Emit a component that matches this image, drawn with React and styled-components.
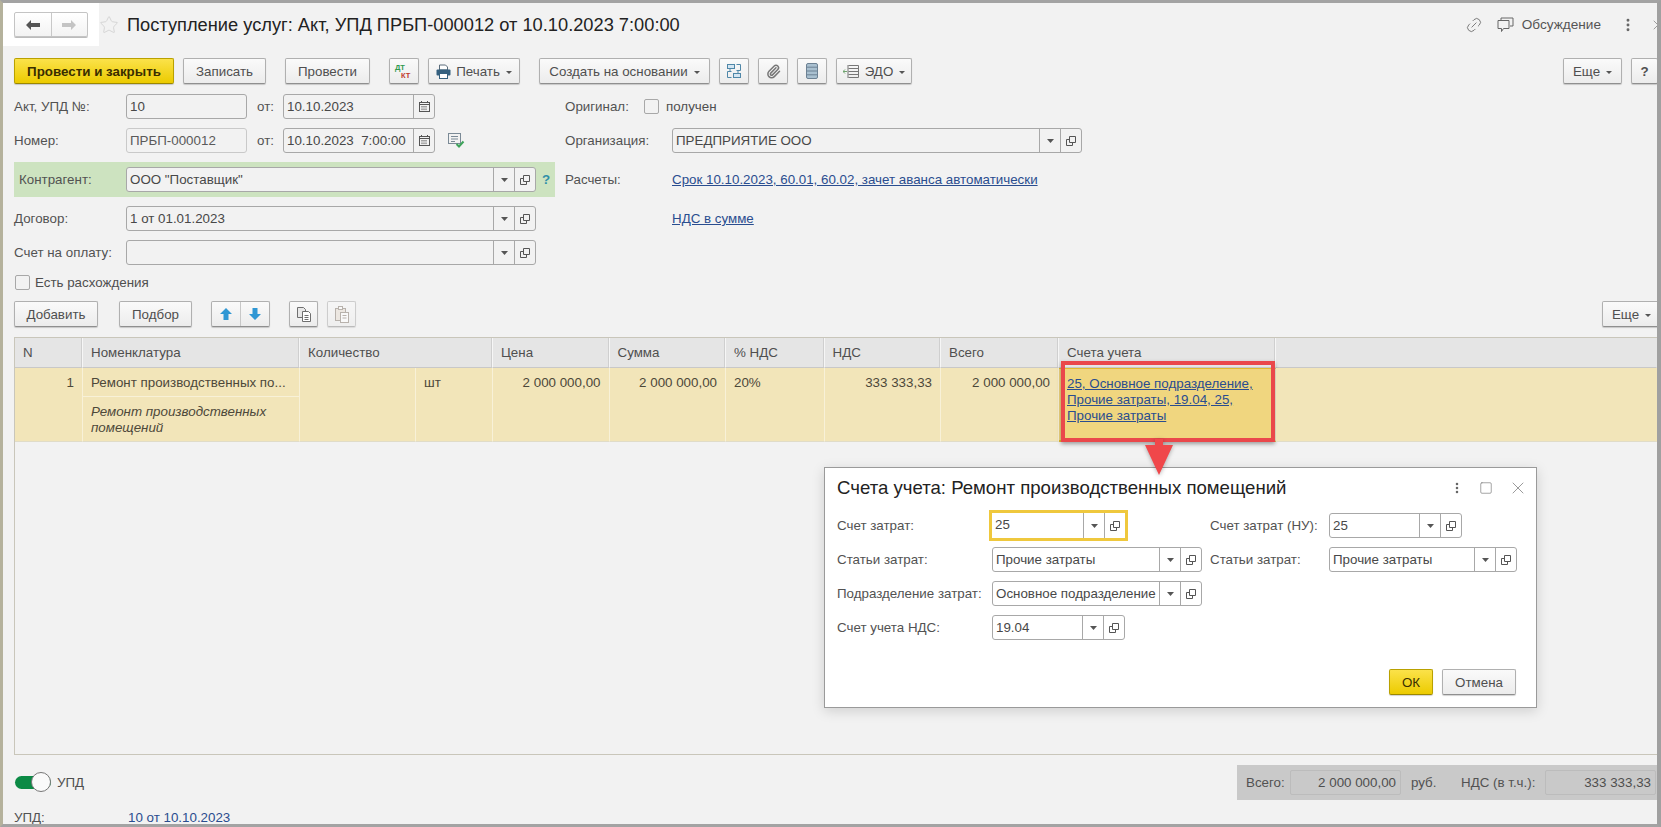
import React from 'react';
import styled, { createGlobalStyle } from 'styled-components';
import { Star, Paperclip, Link2, X, Square, EllipsisVertical } from 'lucide-react';

const GlobalStyle = createGlobalStyle`
  html, body { margin: 0; padding: 0; background: #f2f2f2; }
  * { box-sizing: border-box; }
  body { font-family: "Liberation Sans", Arial, sans-serif; font-size: 13.35px; color: #4f4f4f; }
`;

const Page = styled.div`
  position: relative;
  width: 1661px;
  height: 827px;
  overflow: hidden;
  background: #f2f2f2;
  border-top: 3px solid #a3a3a3;
  border-bottom: 3px solid #a3a3a3;
  border-left: 3px solid #b5b29c;
  border-right: 4px solid #a0a0a0;
  display: flex;
  flex-direction: column;
`;

const TitleBar = styled.div`
  display: flex;
  align-items: center;
  height: 43px;
  flex: none;
`;

const NavArea = styled.div`
  display: flex;
  align-items: center;
  width: 96px;
  height: 43px;
  padding: 0 0 0 11px;
  background: #fff;
`;

const NavGroup = styled.div`
  display: flex;
  width: 74px;
  height: 25px;
  border: 1px solid #c4c4c4;
  border-radius: 2px;
  background: linear-gradient(#fff, #f3f3f3);
  box-shadow: 0 1px 0 #bbb;
`;

const NavButton = styled.div`
  flex: 1;
  display: flex;
  align-items: center;
  justify-content: center;
  & + & { border-left: 1px solid #c8c8c8; }
`;

const Title = styled.h1`
  margin: 0 0 0 8px;
  font-size: 18.25px;
  font-weight: 400;
  color: #222;
  white-space: nowrap;
`;

const TitleActions = styled.div`
  margin-left: auto;
  margin-right: -9px;
  display: flex;
  align-items: center;
  color: #555;
  font-size: 13.6px;
`;

const ActionText = styled.span`
  margin: 0 19px 0 8px;
`;

const Toolbar = styled.div`
  display: flex;
  align-items: center;
  gap: 19px;
  height: 26px;
  margin: ${p => (p.$flush ? '0 -4px 0 11px' : '12px -1px 10px 11px')};
  flex: none;
`;

const ButtonGroup = styled.div`
  display: flex;
  gap: ${p => p.$gap ?? 9}px;
  margin-left: ${p => (p.$right ? 'auto' : 0)};
`;

const Button = styled.div`
  height: 26px;
  width: ${p => p.$w}px;
  display: flex;
  align-items: center;
  justify-content: center;
  gap: 5px;
  white-space: nowrap;
  color: ${p => (p.$primary ? '#3a2e00' : '#4f4f4f')};
  font-weight: ${p => (p.$bold ? 700 : 400)};
  border: 1px solid ${p => (p.$primary ? '#b9a100' : '#b0b0b0')};
  border-bottom-color: ${p => (p.$primary ? '#9c8800' : '#8f8f8f')};
  border-radius: 2px;
  opacity: ${p => (p.$disabled ? 0.55 : 1)};
  background: ${p => (p.$primary
    ? 'linear-gradient(#fbe24a, #eccb00)'
    : 'linear-gradient(#fafafa, #ececec)')};
  box-shadow: 0 1px 1px rgba(0, 0, 0, 0.18);
`;

const SplitButtons = styled.div`
  display: flex;
  width: 59px;
  height: 26px;
  border: 1px solid #b0b0b0;
  border-bottom-color: #8f8f8f;
  border-radius: 2px;
  background: linear-gradient(#fafafa, #ececec);
  box-shadow: 0 1px 1px rgba(0, 0, 0, 0.18);
`;

const Caret = styled.i`
  display: inline-block;
  width: 0;
  height: 0;
  margin-left: 1px;
  margin-top: 2px;
  border-left: 3px solid transparent;
  border-right: 3px solid transparent;
  border-top: 3px solid #555;
`;

const Form = styled.div`
  display: grid;
  grid-template-columns: 541px 1fr;
  grid-template-rows: 25px 25px 35px 25px 25px 17px;
  column-gap: 10px;
  row-gap: 9px;
  margin: 0 0 10px 11px;
  flex: none;
`;

const Row = styled.div`
  display: flex;
  align-items: center;
  grid-column: ${p => (p.$wide ? '1 / 3' : 'auto')};
`;

const GreenRow = styled(Row)`
  background: #cde3c0;
  padding-left: 5px;
`;

const Label = styled.span`
  flex: none;
  width: ${p => p.$w}px;
  margin-left: ${p => p.$ml ?? 0}px;
  color: #525252;
  white-space: nowrap;
`;

const Field = styled.div`
  flex: none;
  display: flex;
  align-items: stretch;
  width: ${p => p.$w}px;
  height: 25px;
  border: 1px solid ${p => (p.$muted ? '#c9c9c9' : '#a8a8a8')};
  border-radius: 3px;
  color: ${p => (p.$muted ? '#5a5a5a' : '#484848')};
  background: ${p => p.$bg ?? 'transparent'};
`;

const FocusField = styled(Field)`
  border: 0;
  border-radius: 0;
  outline: 3px solid #efc83d;
`;

const FieldText = styled.span`
  flex: 1;
  min-width: 0;
  padding-left: 3px;
  line-height: 23px;
  white-space: pre;
  overflow: hidden;
`;

const FieldButton = styled.span`
  flex: none;
  width: 21px;
  display: flex;
  align-items: center;
  justify-content: center;
  border-left: 1px solid #a8a8a8;
`;

const HelpMark = styled.span`
  margin-left: 6px;
  color: #2f8fa8;
  font-weight: 700;
`;

const CheckBox = styled.span`
  flex: none;
  display: inline-block;
  width: 15px;
  height: 15px;
  margin-left: ${p => p.$ml ?? 0}px;
  margin-right: ${p => p.$mr ?? 7}px;
  border: 1px solid #a8a8a8;
  border-radius: 2px;
`;

const Link = styled.a`
  color: #2a4d8f;
  text-decoration: ${p => (p.$plain ? 'none' : 'underline')};
  white-space: nowrap;
`;

const NoteSlot = styled.span`
  display: flex;
  margin-left: 13px;
`;

const Table = styled.div`
  position: relative;
  flex: none;
  height: 418px;
  margin-left: 11px;
  margin-top: 10px;
  border: 1px solid #c9c6ba;
  border-right: 0;
  display: grid;
  grid-template-columns: 68px 217px 116px 77px 116.5px 116.5px 98.5px 116.5px 118px 217px 1fr;
  grid-template-rows: 30px 74px 1fr;
`;

const Head = styled.div`
  grid-column: span ${p => p.$span ?? 1};
  display: flex;
  align-items: center;
  padding-left: 8px;
  background: #e5e5e5;
  border-right: 1px solid ${p => (p.$last ? 'transparent' : '#f6f6f6')};
  border-bottom: 1px solid #c8c8c8;
  box-shadow: inset -1px 0 0 ${p => (p.$last ? 'transparent' : '#cfcfcf')};
  color: #4f4f4f;
`;

const Cell = styled.div`
  position: relative;
  padding: 7px 8px;
  text-align: ${p => (p.$right ? 'right' : 'left')};
  background: #f2e5b9;
  border-right: 1px solid ${p => (p.$last ? 'transparent' : '#f8f1d8')};
  border-bottom: 1px solid #e0dcc8;
  color: #4d4839;
  white-space: nowrap;
`;

const NameCell = styled(Cell)`
  padding: 0;
  display: flex;
  flex-direction: column;
`;

const NameLine = styled.div`
  height: 29px;
  padding: 7px 8px 0;
  border-bottom: 1px solid #f8f1d8;
`;

const NameNote = styled.div`
  padding: 7px 8px 0;
  font-style: italic;
  line-height: 16px;
  white-space: normal;
`;

const AccountCell = styled(Cell)`
  background: #f0d67f;
  border-top: 1px solid #e2bb2e;
  border-bottom: 2px solid #e2bb2e;
  line-height: 16px;
  padding-top: 7px;
`;

const AccountLinks = styled.div`
  display: flex;
  flex-direction: column;
  color: #2a4d8f;
  text-decoration: underline;
`;

const RedBox = styled.div`
  position: absolute;
  top: -8px;
  left: 2px;
  right: 0;
  bottom: -2px;
  border: 4px solid #ea484b;
  box-shadow: 0 2px 4px rgba(0, 0, 0, 0.35);
`;

const ArrowMark = styled.svg`
  position: absolute;
  z-index: 2;
  left: 85px;
  top: 70px;
  filter: drop-shadow(0 1px 2px rgba(0, 0, 0, 0.3));
`;

const Footer = styled.div`
  display: flex;
  align-items: center;
  height: 35px;
  margin: 10px 0 0 12px;
  flex: none;
`;

const ToggleTrack = styled.div`
  position: relative;
  width: 36px;
  height: 13px;
  margin-right: 6px;
  border-radius: 7px;
  background: #0b8a45;
`;

const ToggleKnob = styled.div`
  position: absolute;
  right: 0;
  top: -4px;
  width: 20px;
  height: 20px;
  border-radius: 50%;
  background: #fafafa;
  border: 1px solid #777;
`;

const Totals = styled.div`
  margin-left: auto;
  width: 420px;
  height: 35px;
  display: flex;
  align-items: center;
  padding-left: 9px;
  background: #c9c9c9;
`;

const TotalValue = styled.div`
  flex: none;
  width: 111px;
  height: 25px;
  line-height: 23px;
  padding-right: 4px;
  text-align: right;
  border: 1px solid #bcbcbc;
  border-radius: 2px;
  color: #4f4f4f;
`;

const BottomLine = styled.div`
  display: flex;
  align-items: center;
  margin: 10px 0 0 11px;
  flex: none;
`;

const Modal = styled.div`
  position: absolute;
  z-index: 1;
  left: 821px;
  top: 464px;
  width: 713px;
  height: 241px;
  display: flex;
  flex-direction: column;
  padding: 0 20px 12px 12px;
  background: #fff;
  border: 1px solid #9a9a9a;
  box-shadow: 0 3px 12px rgba(0, 0, 0, 0.15);
`;

const ModalHead = styled.div`
  display: flex;
  align-items: center;
  height: 40px;
  margin-bottom: 5px;
`;

const ModalTitle = styled.div`
  font-size: 18.6px;
  color: #222;
  white-space: nowrap;
`;

const ModalIcons = styled.div`
  margin-left: auto;
  margin-right: -12px;
  display: flex;
  align-items: center;
  gap: 15px;
  color: #666;
`;

const ModalBody = styled.div`
  display: grid;
  grid-template-columns: 373px 1fr;
`;

const ModalColumn = styled.div`
  display: flex;
  flex-direction: column;
  gap: 9px;
`;

const ModalButtons = styled.div`
  margin-top: auto;
  display: flex;
  justify-content: flex-end;
  gap: 9px;
`;

const OpenIcon = () => (
  <svg width="12" height="12" viewBox="0 0 12 12" fill="none" stroke="#555" strokeWidth="1">
    <path d="M4.5 1.5h6v6h-6z" />
    <path d="M4.5 4.5h-3v6h6v-3" />
  </svg>
);

const DropIcon = () => (
  <svg width="7" height="4" viewBox="0 0 7 4"><path d="M0 0h7L3.5 4z" fill="#555" /></svg>
);

const CalendarIcon = () => (
  <svg width="13" height="13" viewBox="0 0 13 13" fill="none" stroke="#555">
    <rect x="1.5" y="2.5" width="10" height="9" />
    <path d="M1.5 4.5h10M3.5 1v2M9.5 1v2" />
    <path d="M3.5 6.5h6M3.5 8h6M3.5 9.6h6" strokeDasharray="1 1" />
  </svg>
);

const NoteCheckIcon = () => (
  <svg width="17" height="15" viewBox="0 0 17 15" fill="none">
    <rect x="0.5" y="0.5" width="12" height="10" stroke="#7b8a96" />
    <path d="M3 3.5h7M3 6h7M3 8.5h4" stroke="#7b8a96" />
    <path d="M8.5 11l2.5 2.5 4.5-5" stroke="#3da35a" strokeWidth="2" />
  </svg>
);

const ArrowLeft = ({ color }) => (
  <svg width="14" height="10" viewBox="0 0 14 10"><path d="M0 5l5-5v3h9v4H5v3z" fill={color} /></svg>
);

const ArrowRight = ({ color }) => (
  <svg width="14" height="10" viewBox="0 0 14 10"><path d="M14 5L9 0v3H0v4h9v3z" fill={color} /></svg>
);

const DtKtIcon = () => (
  <svg width="20" height="16" viewBox="0 0 20 16">
    <text x="1" y="7" fontSize="7.5" fontFamily="Liberation Sans" fontWeight="700" fill="#2e9a4e">ДТ</text>
    <text x="7" y="14.5" fontSize="7.5" fontFamily="Liberation Sans" fontWeight="700" fill="#c0392b">КТ</text>
  </svg>
);

const PrinterIcon = () => (
  <svg width="15" height="15" viewBox="0 0 15 15">
    <path d="M3.5 1h6l2 2v3h-8z" fill="#fff" stroke="#5a6b7a" />
    <rect x="0.5" y="5.5" width="14" height="6" rx="1" fill="#35607f" />
    <rect x="3.5" y="9.5" width="8" height="5" fill="#fff" stroke="#35607f" />
  </svg>
);

const StructureIcon = () => (
  <svg width="16" height="16" viewBox="0 0 16 16" fill="none" stroke="#4f87a8">
    <rect x="1.5" y="1.5" width="7" height="4" fill="#d5e6f2" />
    <rect x="7.5" y="10.5" width="7" height="4" fill="#d5e6f2" />
    <path d="M10.5 1.5h4v6h-4M5.5 8.5h-4v6h4" />
    <path d="M4 6v2M12 8v2" />
  </svg>
);

const ListIcon = () => (
  <svg width="12" height="16" viewBox="0 0 12 16" fill="#a9c0d0" stroke="#6d8294">
    <rect x="0.5" y="0.5" width="11" height="15" rx="1.5" />
    <path d="M0.5 4.2h11M0.5 8h11M0.5 11.8h11" />
  </svg>
);

const EdoIcon = () => (
  <svg width="17" height="15" viewBox="0 0 17 15" fill="none" stroke="#777">
    <path d="M5.5 1.5h10M5.5 4.5h10M5.5 7.5h10M5.5 10.5h10M5.5 13.5h10" />
    <path d="M5 1v13M15.5 1.5v12" />
    <path d="M0 7.5h4M2 5.5L0 7.5l2 2" stroke="#6fa36f" />
  </svg>
);

const MoveIcon = ({ down }) => (
  <svg width="14" height="14" viewBox="0 0 14 14">
    <path d={down ? 'M7 13L1 7h3.5V1h5v6H13z' : 'M7 1l6 6H9.5v6h-5V7H1z'} fill="#2f97d4" />
  </svg>
);

const CopyIcon = () => (
  <svg width="16" height="17" viewBox="0 0 16 17" fill="#fff" stroke="#6f6f6f">
    <path d="M1.5 1.5h6l2 2v8h-8z" fill="#e8e8e8" />
    <path d="M6.5 5.5h6l2 2v8h-8z" />
    <path d="M8.5 9.5h4M8.5 11.5h4M8.5 13.5h4" />
  </svg>
);

const PasteIcon = () => (
  <svg width="16" height="17" viewBox="0 0 16 17" fill="#fff" stroke="#8a7f74">
    <rect x="1.5" y="2.5" width="10" height="12" fill="#e8dfd4" />
    <rect x="4.5" y="0.5" width="4" height="3" />
    <rect x="6.5" y="6.5" width="8" height="10" />
    <path d="M8.5 9.5h4M8.5 12h4" />
  </svg>
);

const ChatIcon = () => (
  <svg width="17" height="16" viewBox="0 0 17 16" fill="none" stroke="#666">
    <path d="M1 3.5h11v8H6.5l-2 3v-3H1z" />
    <path d="M4 3V1h12v8h-3" />
  </svg>
);

const SelectField = ({ w, value, focus, bg }) => {
  const Box = focus ? FocusField : Field;
  return (
    <Box $w={w} $bg={bg}>
      <FieldText>{value}</FieldText>
      <FieldButton><DropIcon /></FieldButton>
      <FieldButton><OpenIcon /></FieldButton>
    </Box>
  );
};

const DateField = ({ value }) => (
  <Field $w={152}>
    <FieldText>{value}</FieldText>
    <FieldButton><CalendarIcon /></FieldButton>
  </Field>
);

export default function App() {
  return (
    <>
      <GlobalStyle />
      <Page>
        <TitleBar>
          <NavArea>
            <NavGroup>
              <NavButton><ArrowLeft color="#555" /></NavButton>
              <NavButton><ArrowRight color="#c4c4c4" /></NavButton>
            </NavGroup>
          </NavArea>
          <Star size={20} color="#d6d6d6" strokeWidth={1.2} />
          <Title>Поступление услуг: Акт, УПД ПРБП-000012 от 10.10.2023 7:00:00</Title>
          <TitleActions>
            <Link2 size={18} color="#777" strokeWidth={1.2} style={{ transform: 'rotate(-45deg)', marginRight: 14 }} />
            <ChatIcon />
            <ActionText>Обсуждение</ActionText>
            <EllipsisVertical size={16} color="#666" strokeWidth={2.4} style={{ marginRight: 14 }} />
            <X size={16} color="#888" strokeWidth={1.2} />
          </TitleActions>
        </TitleBar>

        <Toolbar>
          <ButtonGroup>
            <Button $primary $bold $w={160}>Провести и закрыть</Button>
            <Button $w={83}>Записать</Button>
          </ButtonGroup>
          <Button $w={85}>Провести</Button>
          <ButtonGroup>
            <Button $w={30}><DtKtIcon /></Button>
            <Button $w={92}><PrinterIcon />Печать <Caret /></Button>
          </ButtonGroup>
          <ButtonGroup>
            <Button $w={171}>Создать на основании <Caret /></Button>
            <Button $w={30}><StructureIcon /></Button>
            <Button $w={30}><Paperclip size={15} color="#777" strokeWidth={2.4} /></Button>
            <Button $w={30}><ListIcon /></Button>
            <Button $w={76}><EdoIcon />ЭДО <Caret /></Button>
          </ButtonGroup>
          <ButtonGroup $right>
            <Button $w={59}>Еще <Caret /></Button>
            <Button $w={27}><b>?</b></Button>
          </ButtonGroup>
        </Toolbar>

        <Form>
          <Row>
            <Label $w={112}>Акт, УПД №:</Label>
            <Field $w={121}><FieldText>10</FieldText></Field>
            <Label $w={26} $ml={10}>от:</Label>
            <DateField value="10.10.2023" />
          </Row>
          <Row>
            <Label $w={79}>Оригинал:</Label>
            <CheckBox />получен
          </Row>

          <Row>
            <Label $w={112}>Номер:</Label>
            <Field $w={121} $muted><FieldText>ПРБП-000012</FieldText></Field>
            <Label $w={26} $ml={10}>от:</Label>
            <DateField value="10.10.2023  7:00:00" />
            <NoteSlot><NoteCheckIcon /></NoteSlot>
          </Row>
          <Row>
            <Label $w={107}>Организация:</Label>
            <SelectField w={410} value="ПРЕДПРИЯТИЕ ООО" />
          </Row>

          <GreenRow>
            <Label $w={107}>Контрагент:</Label>
            <SelectField w={410} value='ООО "Поставщик"' bg="#f2f2f2" />
            <HelpMark>?</HelpMark>
          </GreenRow>
          <Row>
            <Label $w={107}>Расчеты:</Label>
            <Link>Срок 10.10.2023, 60.01, 60.02, зачет аванса автоматически</Link>
          </Row>

          <Row>
            <Label $w={112}>Договор:</Label>
            <SelectField w={410} value="1 от 01.01.2023" />
          </Row>
          <Row>
            <Label $w={107} />
            <Link>НДС в сумме</Link>
          </Row>

          <Row $wide>
            <Label $w={112}>Счет на оплату:</Label>
            <SelectField w={410} value="" />
          </Row>

          <Row $wide>
            <CheckBox $ml={1} $mr={5} />Есть расхождения
          </Row>
        </Form>

        <Toolbar $flush>
          <ButtonGroup $gap={21}>
            <Button $w={84}>Добавить</Button>
            <Button $w={73}>Подбор</Button>
          </ButtonGroup>
          <SplitButtons>
            <NavButton><MoveIcon /></NavButton>
            <NavButton><MoveIcon down /></NavButton>
          </SplitButtons>
          <ButtonGroup>
            <Button $w={29}><CopyIcon /></Button>
            <Button $w={29} $disabled><PasteIcon /></Button>
          </ButtonGroup>
          <ButtonGroup $right>
            <Button $w={59}>Еще <Caret /></Button>
          </ButtonGroup>
        </Toolbar>

        <Table>
          <Head>N</Head>
          <Head>Номенклатура</Head>
          <Head $span={2}>Количество</Head>
          <Head>Цена</Head>
          <Head>Сумма</Head>
          <Head>% НДС</Head>
          <Head>НДС</Head>
          <Head>Всего</Head>
          <Head>Счета учета</Head>
          <Head $last />

          <Cell $right>1</Cell>
          <NameCell>
            <NameLine>Ремонт производственных по...</NameLine>
            <NameNote>Ремонт производственных помещений</NameNote>
          </NameCell>
          <Cell />
          <Cell>шт</Cell>
          <Cell $right>2 000 000,00</Cell>
          <Cell $right>2 000 000,00</Cell>
          <Cell>20%</Cell>
          <Cell $right>333 333,33</Cell>
          <Cell $right>2 000 000,00</Cell>
          <AccountCell>
            <AccountLinks>
              <span>25, Основное подразделение,</span>
              <span>Прочие затраты, 19.04, 25,</span>
              <span>Прочие затраты</span>
            </AccountLinks>
            <RedBox />
            <ArrowMark width="30" height="37" viewBox="0 0 30 37">
              <path d="M11 0h8v6h10L15 36 1 6h10z" fill="#f0474a" />
            </ArrowMark>
          </AccountCell>
          <Cell $last />
        </Table>

        <Footer>
          <ToggleTrack><ToggleKnob /></ToggleTrack>
          УПД
          <Totals>
            <Label $w={44}>Всего:</Label>
            <TotalValue>2 000 000,00</TotalValue>
            <Label $w={50} $ml={10}>руб.</Label>
            <Label $w={84}>НДС (в т.ч.):</Label>
            <TotalValue>333 333,33</TotalValue>
          </Totals>
        </Footer>

        <BottomLine>
          <Label $w={114}>УПД:</Label>
          <Link $plain>10 от 10.10.2023</Link>
        </BottomLine>

        <Modal>
          <ModalHead>
            <ModalTitle>Счета учета: Ремонт производственных помещений</ModalTitle>
            <ModalIcons>
              <EllipsisVertical size={14} strokeWidth={2.4} />
              <Square size={14} strokeWidth={1} />
              <X size={20} strokeWidth={0.8} />
            </ModalIcons>
          </ModalHead>
          <ModalBody>
            <ModalColumn>
              <Row>
                <Label $w={155}>Счет затрат:</Label>
                <SelectField w={133} value="25" focus />
              </Row>
              <Row>
                <Label $w={155}>Статьи затрат:</Label>
                <SelectField w={210} value="Прочие затраты" />
              </Row>
              <Row>
                <Label $w={155}>Подразделение затрат:</Label>
                <SelectField w={210} value="Основное подразделение" />
              </Row>
              <Row>
                <Label $w={155}>Счет учета НДС:</Label>
                <SelectField w={133} value="19.04" />
              </Row>
            </ModalColumn>
            <ModalColumn>
              <Row>
                <Label $w={119}>Счет затрат (НУ):</Label>
                <SelectField w={133} value="25" />
              </Row>
              <Row>
                <Label $w={119}>Статьи затрат:</Label>
                <SelectField w={188} value="Прочие затраты" />
              </Row>
            </ModalColumn>
          </ModalBody>
          <ModalButtons>
            <Button $primary $w={44}>ОК</Button>
            <Button $w={74}>Отмена</Button>
          </ModalButtons>
        </Modal>
      </Page>
    </>
  );
}
